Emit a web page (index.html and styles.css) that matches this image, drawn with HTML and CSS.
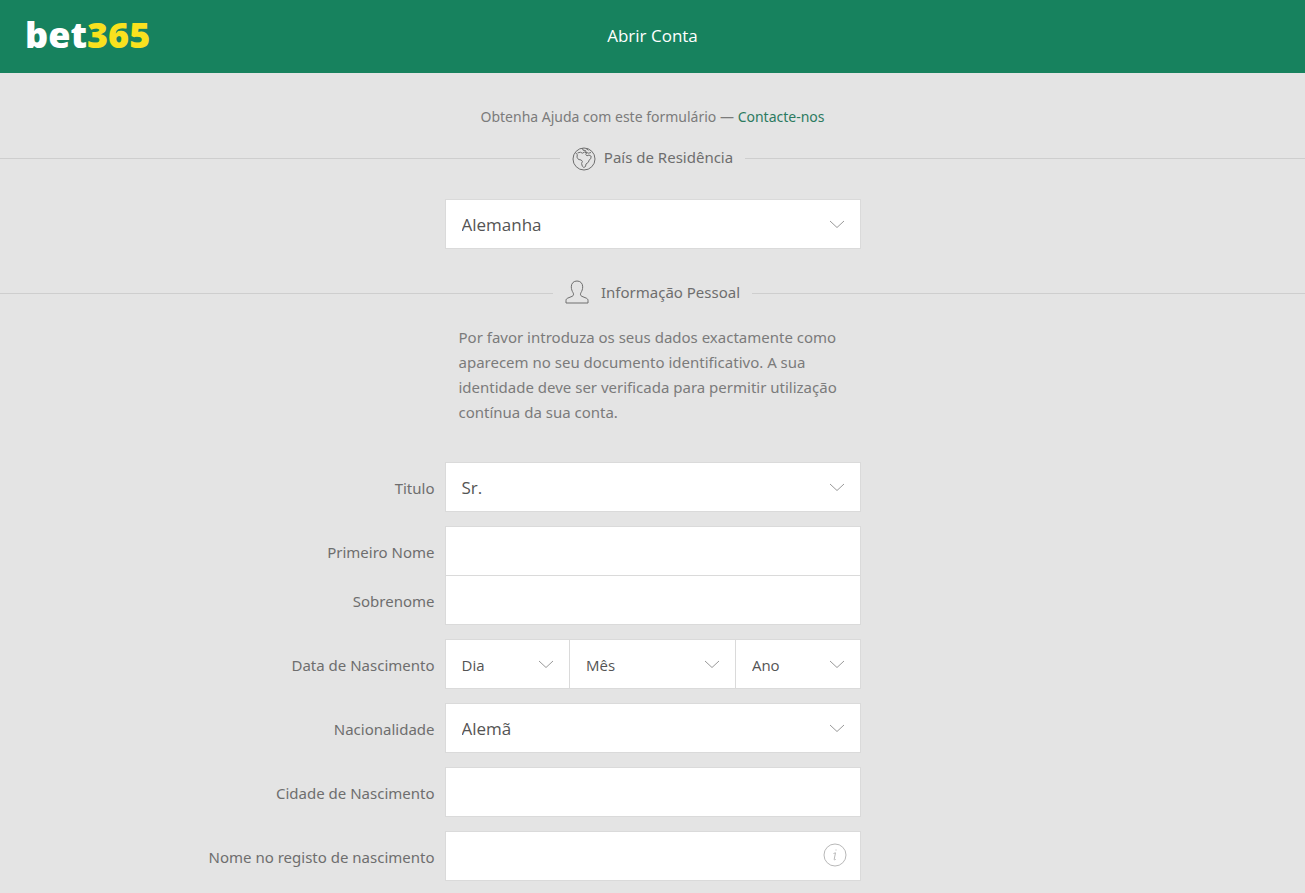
FILE: index.html
```html
<!DOCTYPE html>
<html lang="pt">
<head>
<meta charset="utf-8">
<meta name="viewport" content="width=device-width, initial-scale=1">
<title>Abrir Conta</title>
<link rel="stylesheet" href="styles.css">
</head>
<body>
<svg class="sprite" aria-hidden="true">
  <symbol id="chevron" viewBox="0 0 16 9"><path d="M1 1l7 6.500L15 1"/></symbol>
</svg>
<header class="topbar">
  <a class="logo" href="#">bet<span class="logo-digits">365</span></a>
  <h1 class="topbar-title">Abrir Conta</h1>
</header>
<main>
  <p class="help">Obtenha Ajuda com este formulário — <a href="#">Contacte-nos</a></p>
  <form class="form">
    <h2 class="section-title">
      <svg class="icon-globe" viewBox="0 0 24 24" aria-hidden="true">
        <circle cx="12" cy="12" r="11"/>
        <path d="M3.500 5.800l1.800 1.700-.3 2.700 1.500 2.300 2.700.5 1.200 1.400-.8 2.100.7 2.700 1.500 1.300 1.700-1 .5-2.500 2.500-1.900.5-1.900 1.700-1.400.5-2.500-2.200-1.300-2 .8-1.300-1.300.8-1.500-1.800-1-2.300 1.200-2-1L5.500 6"/>
        <path d="M10.500 1.200l.5 2 2.500.3.500 1.700 2.500 1 2.500-.7M14 1.500l2.500 1.800"/>
      </svg>
      <span>País de Residência</span>
    </h2>
    <div class="row row-country">
      <div class="control">
        <select class="field" aria-label="País de Residência"><option>Alemanha</option></select>
        <svg class="chevron" aria-hidden="true"><use href="#chevron"/></svg>
      </div>
    </div>
    <h2 class="section-title section-personal">
      <svg class="icon-person" viewBox="0 0 24 24" aria-hidden="true">
        <path d="M1 23v-2.500c0-1.200.6-1.900 1.800-2.400l4.400-1.800c1.400-.6 1.700-2.100.9-3.500C7 11 6.300 9 6.300 6.800 6.300 3.200 8.700 1 12 1s5.700 2.200 5.700 5.800c0 2.200-.7 4.200-1.800 6-.8 1.400-.5 2.900.9 3.500l4.400 1.800c1.200.5 1.800 1.200 1.800 2.400V23z"/>
      </svg>
      <span>Informação Pessoal</span>
    </h2>
    <p class="notice">Por favor introduza os seus dados exactamente como aparecem no seu documento identificativo. A sua identidade deve ser verificada para permitir utilização contínua da sua conta.</p>
    <div class="rows">
      <div class="row">
        <label for="title">Titulo</label>
        <div class="control">
          <select class="field" id="title"><option>Sr.</option></select>
          <svg class="chevron" aria-hidden="true"><use href="#chevron"/></svg>
        </div>
      </div>
      <div class="names">
        <div class="row">
          <label for="first">Primeiro Nome</label>
          <div class="control"><input class="field" id="first" type="text"></div>
        </div>
        <div class="row">
          <label for="last">Sobrenome</label>
          <div class="control"><input class="field" id="last" type="text"></div>
        </div>
      </div>
      <div class="row">
        <label for="day">Data de Nascimento</label>
        <div class="date">
          <div class="control">
            <select class="field field-small" id="day"><option>Dia</option></select>
            <svg class="chevron" aria-hidden="true"><use href="#chevron"/></svg>
          </div>
          <div class="control">
            <select class="field field-small" aria-label="Mês"><option>Mês</option></select>
            <svg class="chevron" aria-hidden="true"><use href="#chevron"/></svg>
          </div>
          <div class="control">
            <select class="field field-small" aria-label="Ano"><option>Ano</option></select>
            <svg class="chevron" aria-hidden="true"><use href="#chevron"/></svg>
          </div>
        </div>
      </div>
      <div class="row">
        <label for="nationality">Nacionalidade</label>
        <div class="control">
          <select class="field" id="nationality"><option>Alemã</option></select>
          <svg class="chevron" aria-hidden="true"><use href="#chevron"/></svg>
        </div>
      </div>
      <div class="row">
        <label for="city">Cidade de Nascimento</label>
        <div class="control"><input class="field" id="city" type="text"></div>
      </div>
      <div class="row">
        <label for="birthname">Nome no registo de nascimento</label>
        <div class="control">
          <input class="field" id="birthname" type="text">
          <button class="info" type="button" aria-label="Informação">
            <svg viewBox="0 0 24 24" aria-hidden="true"><circle cx="12" cy="12" r="11"/><path d="M10.500 10.500l2-.7-1.300 6.500c-.1.700.5.8 1.500.1M13 6.500v1"/></svg>
          </button>
        </div>
      </div>
    </div>
  </form>
</main>
</body>
</html>
```
FILE: styles.css
```css
* {
  box-sizing: border-box;
}

body {
  margin: 0;
  background: #e4e4e4;
  color: #6e6e6e;
  font: 15px/25px "Noto Sans", "Open Sans", sans-serif;
}

svg {
  fill: none;
  stroke: currentColor;
}

h1, h2, p {
  margin: 0;
  font-weight: 400;
}

.sprite {
  display: none;
}

.topbar {
  display: grid;
  grid-template-columns: 1fr auto 1fr;
  align-items: center;
  height: 73px;
  padding: 0 25px 3px;
  background: #17825e;
  color: #fff;
  font-family: "Open Sans", "Noto Sans", sans-serif;
}

.logo {
  color: #fff;
  font-size: 36px;
  font-weight: 800;
  line-height: 48px;
  text-decoration: none;
}

.logo-digits {
  color: #f9e11e;
}

.topbar-title {
  font-size: 17px;
}

.help {
  padding-top: 31px;
  font-size: 14px;
  color: #7b7b7b;
  text-align: center;
}

.help a {
  color: #2c7a60;
  text-decoration: none;
}

.section-title {
  display: flex;
  align-items: center;
  height: 24px;
  margin-top: 17px;
  font-size: 15px;
}

.section-title span {
  padding-bottom: 2px;
}

.section-title::before,
.section-title::after {
  content: "";
  flex: 1;
  height: 1px;
  background: #cecece;
}

.section-title::before {
  margin-right: 12px;
}

.section-title::after {
  margin-left: 12px;
}

.icon-globe,
.icon-person {
  width: 24px;
  height: 24px;
  margin-right: 8px;
}

.icon-globe {
  margin-top: 2px;
}

.icon-person {
  margin-right: 12px;
  margin-bottom: 3px;
}

.section-personal {
  margin-top: 33px;
}

.notice {
  width: 414px;
  max-width: 100%;
  margin: 20px auto 0;
  padding: 0 13px;
  color: #7b7b7b;
}

.rows {
  display: grid;
  gap: 16px;
  padding: 38px 0 12px;
}

.row {
  display: grid;
  grid-template-columns: 1fr minmax(0, 414px) 1fr;
}

.row-country {
  margin-top: 30px;
}

.row > .control,
.date {
  grid-column: 2;
}

.row > label {
  padding: 13px 11px 0 0;
  text-align: right;
}

.names {
  display: grid;
  gap: 1px;
}

.control {
  position: relative;
}

.field {
  display: block;
  width: 100%;
  height: 48px;
  padding: 1px 16px 0;
  border: 0;
  border-radius: 0;
  appearance: none;
  background: #fff;
  box-shadow: 0 0 0 1px #dadada;
  color: #545454;
  font: 17px "Open Sans", "Noto Sans", sans-serif;
}

.field-small {
  font-size: 15px;
}

.chevron {
  position: absolute;
  top: 20px;
  right: 15px;
  width: 16px;
  height: 9px;
  color: #999;
  pointer-events: none;
}

.date {
  display: grid;
  grid-template-columns: 3fr 4fr 3fr;
  gap: 1px;
}

.info {
  position: absolute;
  top: 11px;
  right: 13px;
  width: 24px;
  height: 24px;
  padding: 0;
  border: 0;
  background: none;
  color: #b8b8b8;
}

.info svg {
  display: block;
}
```
